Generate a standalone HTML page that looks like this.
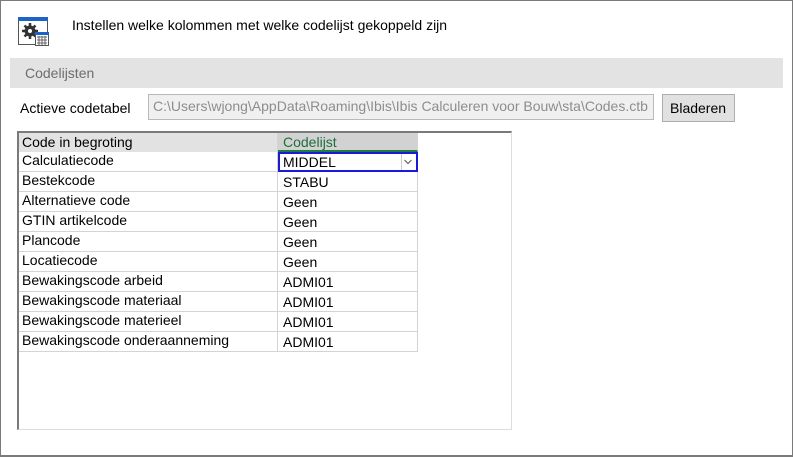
<!DOCTYPE html>
<html><head><style>
*{margin:0;padding:0;box-sizing:border-box}
body{width:793px;height:457px;background:#fff;font-family:"Liberation Sans",Arial,sans-serif;font-size:14px;color:#000;position:relative;overflow:hidden}
.a{position:absolute}
.row{position:absolute;left:19px;height:20px;width:400px}
.c1{position:absolute;left:0;top:0;width:259px;height:20px;border-right:1px solid #d4d4d4;border-bottom:1px solid #d4d4d4;padding:0 0 0 3px;white-space:nowrap}
.c2{position:absolute;left:259px;top:0;width:140px;height:20px;border-right:1px solid #d4d4d4;border-bottom:1px solid #d4d4d4;padding:2px 0 0 5px}
</style></head><body>
<div class="a" style="left:0;top:0;width:793px;height:457px;border:1px solid #7a7a7a;border-bottom-width:2px"></div>
<svg class="a" style="left:17px;top:16px" width="34" height="31" viewBox="0 0 34 31">
<rect x="1.5" y="1.5" width="29" height="27" fill="#fff" stroke="#555"/>
<rect x="1" y="1" width="30" height="4" fill="#1e64c8"/>
<circle cx="13" cy="15" r="5.5" fill="#333"/>
<path d="M13 7v16M5 15h16M7.5 9.5l11 11M18.5 9.5l-11 11" stroke="#333" stroke-width="2.5"/>
<circle cx="13" cy="15" r="2" fill="#fff"/>
<rect x="18.5" y="16.5" width="13" height="13" fill="#fff" stroke="#555"/>
<rect x="18" y="16" width="14" height="3" fill="#1e64c8"/>
<path d="M20 21h10M20 24h10M20 27h10M22 20v9M25 20v9M28 20v9" stroke="#666" stroke-width="1"/>
</svg>
<div class="a" style="left:72px;top:17px">Instellen welke kolommen met welke codelijst gekoppeld zijn</div>
<div class="a" style="left:10px;top:58px;width:773px;height:30px;background:#e3e3e3"></div>
<div class="a" style="left:25px;top:65px;color:#6d6d6d">Codelijsten</div>
<div class="a" style="left:20px;top:100px">Actieve codetabel</div>
<div class="a" style="left:148px;top:94px;width:506px;height:26px;border:1px solid #b9b9b9;background:#f0f0f0;color:#8d8d8d;padding:3px 0 0 4px;white-space:nowrap;overflow:hidden">C:\Users\wjong\AppData\Roaming\Ibis\Ibis Calculeren voor Bouw\sta\Codes.ctb</div>
<div class="a" style="left:662px;top:94px;width:73px;height:28px;border:1px solid #adadad;background:#e1e1e1;padding:5px 0 0 7px">Bladeren</div>
<div class="a" style="left:17px;top:131px;width:495px;height:299px;border-left:2px solid #7a7a7a;border-top:2px solid #7a7a7a;border-right:1px solid #dcdcdc;border-bottom:1px solid #dcdcdc"></div>
<div class="row" style="top:133px;height:19px">
<div class="c1" style="background:#e2e2e2;height:19px;border-bottom:none;padding-top:1px">Code in begroting</div>
<div class="c2" style="background:#d2d2d2;color:#1e6e3c;height:19px;border-bottom:2px solid #1e7e3c;padding-top:1px">Codelijst</div>
</div>
<div class="row" style="top:152px"><div class="c1">Calculatiecode</div>
<div class="c2" style="border:2px solid #1a1ad8;left:259px;width:140px;padding:0 0 0 3px">MIDDEL<svg style="position:absolute;right:1px;top:0" width="14" height="16" viewBox="0 0 14 16"><path d="M0.5 0v16" stroke="#ccc"/><path d="M3.5 6l3.5 3.5L10.5 6" fill="none" stroke="#555" stroke-width="1"/></svg></div></div>
<div class="row" style="top:172px"><div class="c1">Bestekcode</div><div class="c2">STABU</div></div>
<div class="row" style="top:192px"><div class="c1">Alternatieve code</div><div class="c2">Geen</div></div>
<div class="row" style="top:212px"><div class="c1">GTIN artikelcode</div><div class="c2">Geen</div></div>
<div class="row" style="top:232px"><div class="c1">Plancode</div><div class="c2">Geen</div></div>
<div class="row" style="top:252px"><div class="c1">Locatiecode</div><div class="c2">Geen</div></div>
<div class="row" style="top:272px"><div class="c1">Bewakingscode arbeid</div><div class="c2">ADMI01</div></div>
<div class="row" style="top:292px"><div class="c1">Bewakingscode materiaal</div><div class="c2">ADMI01</div></div>
<div class="row" style="top:312px"><div class="c1">Bewakingscode materieel</div><div class="c2">ADMI01</div></div>
<div class="row" style="top:332px"><div class="c1">Bewakingscode onderaanneming</div><div class="c2">ADMI01</div></div>
</body></html>
